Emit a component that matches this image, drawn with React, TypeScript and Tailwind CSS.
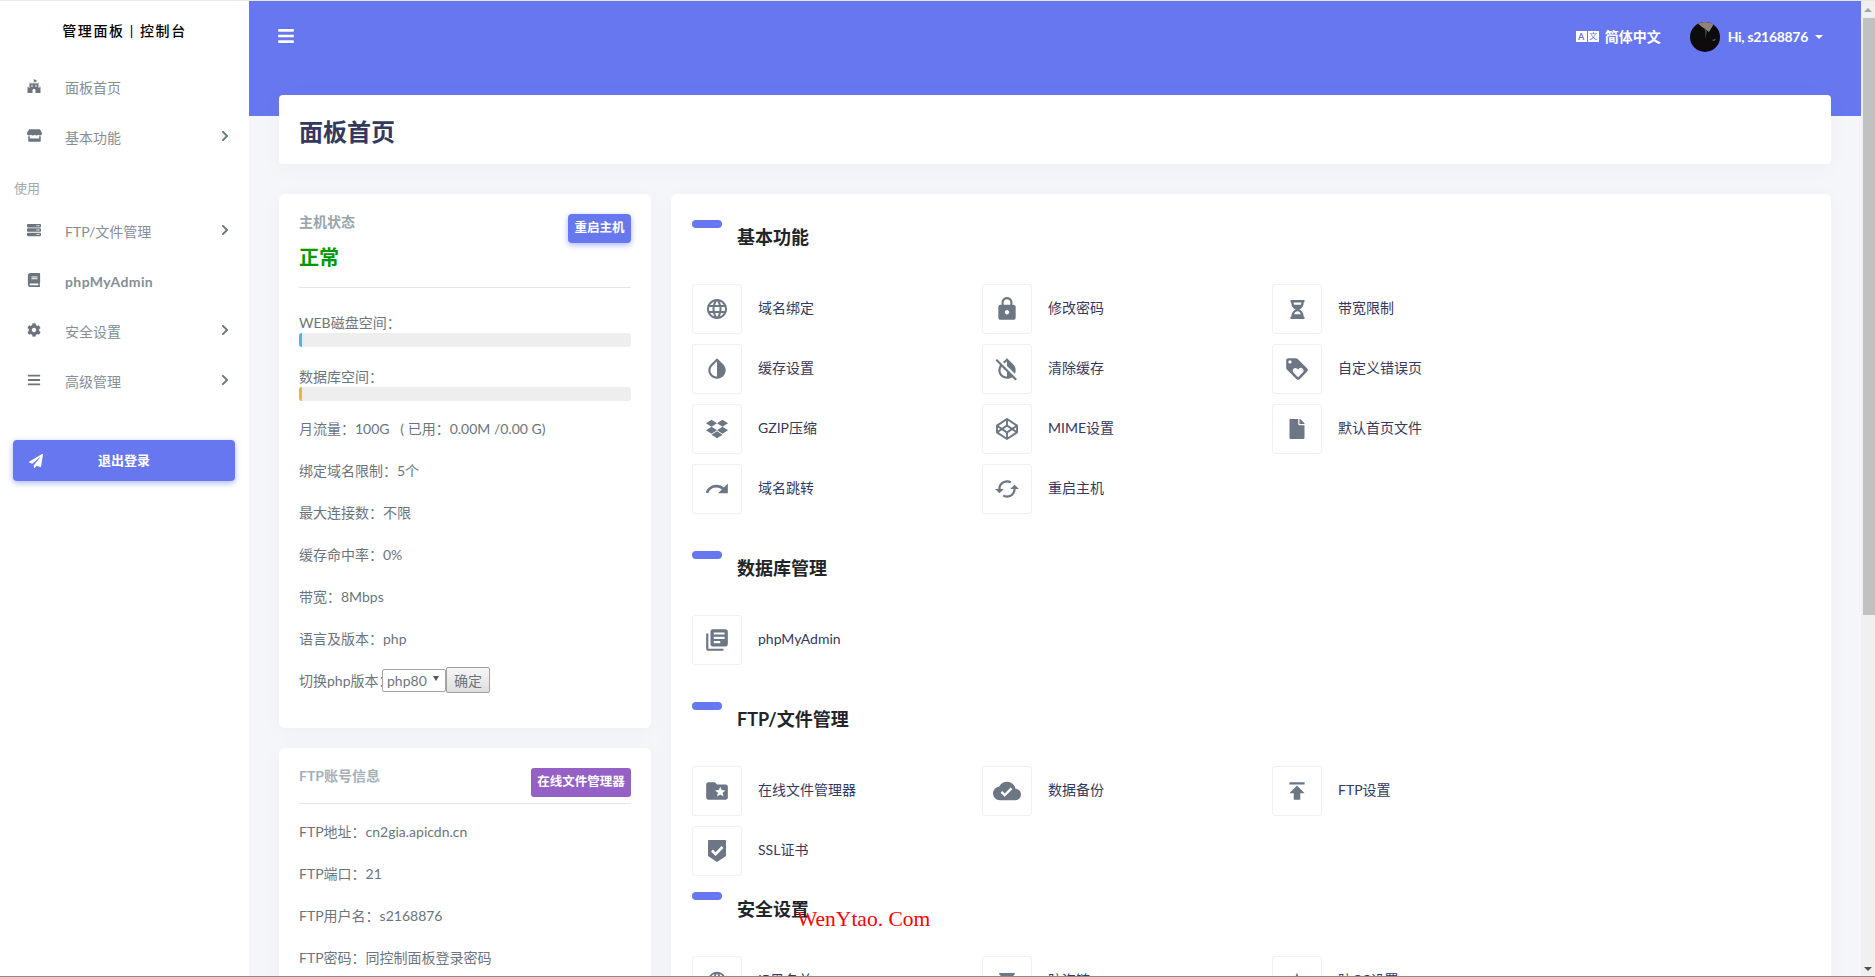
import React from "react";
import { FaFortAwesome, FaStore, FaServer, FaBook, FaCog, FaBars, FaChevronRight, FaPaperPlane, FaDropbox, FaCodepen, FaHourglassHalf, FaFile, FaFilter } from "react-icons/fa";
import { MdLock, MdInvertColors, MdInvertColorsOff, MdRedo, MdCached, MdLoyalty, MdLibraryBooks, MdFolderSpecial, MdCloudDone, MdPublish, MdLanguage, MdNavigation } from "react-icons/md";

const font = "font-['Lato','Noto_Sans_CJK_SC',sans-serif]";

function NavItem({ icon, label, arrow, bold }: { icon: React.ReactNode; label: string; arrow?: boolean; bold?: boolean }) {
  return (
    <div className="flex items-center h-[50px] pl-[25px] pr-[18px] text-[14px] text-[#868e96]">
      <span className="w-[18px] flex justify-center text-[#6c757d] -mt-[3px]">{icon}</span>
      <span className={`ml-[22px] flex-1 ${bold ? "font-bold tracking-[0.4px]" : ""}`}>{label}</span>
      {arrow && <FaChevronRight className="text-[12px] text-[#6c757d] -mt-[3px]" />}
    </div>
  );
}

function Tile({ icon, label }: { icon: React.ReactNode; label: string }) {
  return (
    <div className="flex items-center h-[50px]">
      <div className="w-[50px] h-[50px] border border-[#f0f0f0] rounded-[3px] flex items-center justify-center text-[#6c7685] text-[22px] bg-white shrink-0">
        {icon}
      </div>
      <span className="ml-[16px] text-[14px] text-[#34395e] -mt-[3px]">{label}</span>
    </div>
  );
}

function Section({ title, className, children }: { title: string; className?: string; children: React.ReactNode }) {
  return (
    <section className={className}>
      <div className="w-[30px] h-[8px] rounded-[4px] bg-[#6777ef]" />
      <h2 className="ml-[45px] text-[18px] leading-[18px] font-bold text-[#212529]">{title}</h2>
      <div className="mt-[38px] grid grid-cols-[290px_290px_290px] gap-y-[10px]">{children}</div>
    </section>
  );
}

function Row({ children, className = "" }: { children: React.ReactNode; className?: string }) {
  return <div className={`h-[42px] flex items-center text-[14px] text-[#6c757d] ${className}`}>{children}</div>;
}

function Bar({ color }: { color: string }) {
  return (
    <div className="h-[14px] bg-[#eeeeee] rounded-[3px] overflow-hidden">
      <div className={`h-full w-[3px] ${color}`} />
    </div>
  );
}

function Shield() {
  return (
    <svg className="w-[20px] h-[24px]" viewBox="0 0 20 24">
      <path d="M2 1h16a1 1 0 0 1 1 1v15l-9 6-9-6V2a1 1 0 0 1 1-1z" fill="currentColor" />
      <path d="M5 11.5l3.6 3.6L15.5 8" fill="none" stroke="#fff" strokeWidth="2.6" />
    </svg>
  );
}

export default function App() {
  return (
    <div className={`${font} relative h-[977px] w-[1875px] overflow-hidden flex flex-col bg-[#f4f6f9]`}>
      <div className="h-px bg-[#e8e8e8] shrink-0" />
      <div className="flex flex-1 min-h-0">
        <aside className="w-[249px] shrink-0 bg-white">
          <div className="h-[59px] flex items-center justify-center text-[14px] font-medium tracking-[1.6px] text-black">管理面板 | 控制台</div>
          <div className="mt-[2px]">
            <NavItem icon={<FaFortAwesome className="text-[14px]" />} label="面板首页" />
            <NavItem icon={<FaStore className="text-[15px]" />} label="基本功能" arrow />
          </div>
          <div className="mt-[16px] pl-[14px] h-[22px] flex items-center text-[13px] text-[#a4a9ad]">使用</div>
          <div className="mt-[6px]">
            <NavItem icon={<FaServer className="text-[14px]" />} label="FTP/文件管理" arrow />
            <NavItem icon={<FaBook className="text-[14px]" />} label="phpMyAdmin" bold />
            <NavItem icon={<FaCog className="text-[14px]" />} label="安全设置" arrow />
            <NavItem icon={<FaBars className="text-[14px]" />} label="高级管理" arrow />
          </div>
          <div className="mx-[13px] mt-[34px] h-[41px] w-[222px] rounded-[4px] bg-[#6777ef] shadow-[0_2px_6px_#acb5f6] flex items-center pl-[16px] pr-[30px] text-white">
            <FaPaperPlane className="text-[14px]" />
            <span className="flex-1 text-center text-[13px] font-bold">退出登录</span>
          </div>
        </aside>

        <main className="flex-1 min-w-0 overflow-hidden">
          <header className="h-[115px] bg-[#6777ef] flex items-start pl-[28px] pr-[38px] text-white">
            <FaBars className="mt-[26px] text-[18px]" />
            <div className="ml-auto mt-[21px] flex items-center h-[30px]">
              <div className="flex gap-[1px] -mt-[2px]">
                <span className="w-[11px] h-[11px] bg-white text-[#6777ef] text-[9px] leading-[11px] font-bold text-center">A</span>
                <span className="w-[11px] h-[11px] bg-white text-[#6777ef] text-[8px] leading-[11px] text-center">文</span>
              </div>
              <span className="ml-[6px] text-[14px] font-bold -mt-[2px]">简体中文</span>
              <svg className="ml-[29px] w-[30px] h-[30px] rounded-full" viewBox="0 0 30 30">
                <rect width="30" height="30" fill="#0d0b0c" />
                <path d="M6 0 H25 L19 10 L15 7 L12 5 Z" fill="#8f8379" />
                <path d="M14 6 L17 9 L15.5 17 L15 9 Z" fill="#3a4658" />
                <path d="M22 18 L26 17 L24 19 Z" fill="#777" />
              </svg>
              <span className="ml-[8px] text-[14px] font-bold tracking-[-0.3px] -mt-[1px]">Hi, s2168876</span>
              <span className="ml-[7px] w-0 h-0 border-x-[4px] border-x-transparent border-t-[4px] border-t-white" />
            </div>
          </header>

          <div className="-mt-[21px] px-[30px]">
            <div className="h-[69px] bg-white rounded-[4px] shadow-[0_4px_25px_rgba(0,0,0,0.03)] flex items-center pl-[20px] pt-[5px]">
              <h1 className="text-[24px] font-bold text-[#34395e]">面板首页</h1>
            </div>

            <div className="mt-[30px] flex gap-[20px] items-start">
              <div className="w-[372px] shrink-0 flex flex-col gap-[20px]">
                <div className="h-[534px] bg-white rounded-[6px] shadow-[0_4px_25px_rgba(0,0,0,0.03)] px-[20px]">
                  <div className="h-[94px] border-b border-[#e5e5e5] relative">
                    <div className="pt-[19px] text-[14px] leading-[18px] font-bold text-[#98a6ad]">主机状态</div>
                    <div className="mt-[13px] text-[20px] leading-[26px] font-bold text-[#009900]">正常</div>
                    <button className="absolute right-0 top-[20px] w-[63px] h-[29px] rounded-[4px] bg-[#6777ef] text-white text-[12.5px] font-bold shadow-[0_2px_6px_#acb5f6]">重启主机</button>
                  </div>
                  <div className="mt-[25px] text-[14px] leading-[20px] text-[#6c757d]">WEB磁盘空间：</div>
                  <Bar color="bg-[#4ab9dd]" />
                  <div className="mt-[20px] text-[14px] leading-[20px] text-[#6c757d]">数据库空间：</div>
                  <Bar color="bg-[#f3b13e]" />
                  <div className="mt-[6px]">
                    <Row>月流量：100G &nbsp; ( 已用：0.00M /0.00 G)</Row>
                    <Row>绑定域名限制：5个</Row>
                    <Row>最大连接数：不限</Row>
                    <Row>缓存命中率：0%</Row>
                    <Row>带宽：8Mbps</Row>
                    <Row>语言及版本：php</Row>
                    <Row>
                      <span className="w-[83px] shrink-0 whitespace-nowrap">切换php版本：</span>
                      <span className="relative">
                        <select className="appearance-none w-[64px] h-[23px] border border-[#a6a6a6] rounded-[2px] bg-white pl-[4px] pt-[1px] text-[14px] leading-[20px] text-[#6c757d] block">
                          <option>php80</option>
                        </select>
                        <span className="absolute right-[7px] top-[7px] w-0 h-0 border-x-[3px] border-x-transparent border-t-[5px] border-t-[#555]" />
                      </span>
                      <button className="w-[44px] h-[26px] border border-[#a0a0a0] rounded-[2px] bg-gradient-to-b from-[#f6f6f6] to-[#dedede] text-[14px] text-[#6c757d]">确定</button>
                    </Row>
                  </div>
                </div>

                <div className="h-[300px] bg-white rounded-[6px] shadow-[0_4px_25px_rgba(0,0,0,0.03)] px-[20px]">
                  <div className="h-[56px] border-b border-[#e5e5e5] relative">
                    <div className="pt-[19px] text-[14px] leading-[18px] font-bold text-[#a7b0b6]">FTP账号信息</div>
                    <button className="absolute right-0 top-[20px] w-[100px] h-[29px] rounded-[3px] bg-[#9661c6] text-white text-[12.5px] font-bold">在线文件管理器</button>
                  </div>
                  <div className="mt-[6px]">
                    <Row>FTP地址：cn2gia.apicdn.cn</Row>
                    <Row>FTP端口：21</Row>
                    <Row>FTP用户名：s2168876</Row>
                    <Row>FTP密码：同控制面板登录密码</Row>
                  </div>
                </div>
              </div>

              <div className="flex-1 h-[900px] bg-white rounded-[6px] shadow-[0_4px_25px_rgba(0,0,0,0.03)] pl-[21px] pt-[26px]">
                <Section title="基本功能">
                  <Tile icon={<MdLanguage className="text-[24px]" />} label="域名绑定" />
                  <Tile icon={<MdLock className="text-[26px]" />} label="修改密码" />
                  <Tile icon={<FaHourglassHalf className="text-[19px]" />} label="带宽限制" />
                  <Tile icon={<MdInvertColors className="text-[26px]" />} label="缓存设置" />
                  <Tile icon={<MdInvertColorsOff className="text-[26px]" />} label="清除缓存" />
                  <Tile icon={<MdLoyalty className="text-[26px]" />} label="自定义错误页" />
                  <Tile icon={<FaDropbox />} label="GZIP压缩" />
                  <Tile icon={<FaCodepen />} label="MIME设置" />
                  <Tile icon={<FaFile className="text-[20px]" />} label="默认首页文件" />
                  <Tile icon={<MdRedo className="text-[26px]" />} label="域名跳转" />
                  <Tile icon={<MdCached className="text-[26px]" />} label="重启主机" />
                </Section>
                <Section title="数据库管理" className="mt-[37px]">
                  <Tile icon={<MdLibraryBooks className="text-[26px]" />} label="phpMyAdmin" />
                </Section>
                <Section title="FTP/文件管理" className="mt-[37px]">
                  <Tile icon={<MdFolderSpecial className="text-[26px]" />} label="在线文件管理器" />
                  <Tile icon={<MdCloudDone className="text-[28px]" />} label="数据备份" />
                  <Tile icon={<MdPublish className="text-[26px]" />} label="FTP设置" />
                  <Tile icon={<Shield />} label="SSL证书" />
                </Section>
                <Section title="安全设置" className="mt-[16px]">
                  <Tile icon={<MdLanguage className="text-[22px]" />} label="IP黑名单" />
                  <Tile icon={<FaFilter className="text-[16px]" />} label="防盗链" />
                  <Tile icon={<MdNavigation className="text-[20px]" />} label="防CC设置" />
                </Section>
              </div>
            </div>
          </div>
        </main>

        <div className="w-[14px] shrink-0 bg-[#f0f0f0] flex flex-col items-center">
          <span className="mt-[7px] w-0 h-0 border-x-[4px] border-x-transparent border-b-[4px] border-b-[#a3a3a3]" />
          <div className="mt-[6px] ml-[2px] w-[12px] h-[597px] bg-[#c1c1c1]" />
          <span className="mt-auto mb-[5px] w-0 h-0 border-x-[4px] border-x-transparent border-t-[4px] border-t-[#505050]" />
        </div>
      </div>
      <div className="h-px bg-[#8a8a8a] shrink-0" />

      <div className="absolute left-[797px] top-[905px] font-['Liberation_Serif',serif] text-[21.5px] leading-[28px] text-[#ff0000] whitespace-nowrap">WenYtao. Com</div>
    </div>
  );
}
